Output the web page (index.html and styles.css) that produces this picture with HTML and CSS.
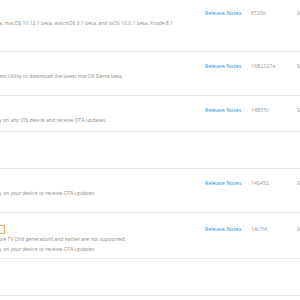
FILE: index.html
```html
<!DOCTYPE html>
<html>
<head>
<meta charset="utf-8">
<link rel="stylesheet" href="styles.css">
</head>
<body>
<div class="table">
  <div class="row r0">
    <div class="info">
      <div class="title"></div>
      <div class="desc">a, macOS 10.12.1 beta, watchOS 3.1 beta, and tvOS 10.0.1 beta. Xcode 8.1</div>
    </div>
    <a class="notes">Release Notes</a>
    <div class="build">8T29o</div>
    <div class="date">Sep 2016</div>
  </div>
  <div class="row r1">
    <div class="info">
      <div class="title"></div>
      <div class="desc">ess Utility to download the latest macOS Sierra beta.</div>
    </div>
    <a class="notes">Release Notes</a>
    <div class="build">16B2327e</div>
    <div class="date">Sep 2016</div>
  </div>
  <div class="row r2">
    <div class="info">
      <div class="title"></div>
      <div class="desc">y on any iOS device and receive OTA updates.</div>
    </div>
    <a class="notes">Release Notes</a>
    <div class="build">14B55c</div>
    <div class="date">Sep 2016</div>
  </div>
  <div class="row r3"></div>
  <div class="row r4">
    <div class="info">
      <div class="title"></div>
      <div class="desc">y on your device to receive OTA updates.</div>
    </div>
    <a class="notes">Release Notes</a>
    <div class="build">14S452</div>
    <div class="date">Sep 2016</div>
  </div>
  <div class="row r5">
    <div class="info">
      <div class="title"><span class="badge">Beta</span></div>
      <div class="desc">ple TV (3rd generation) and earlier are not supported.</div>
      <div class="desc">y on your device to receive OTA updates.</div>
    </div>
    <a class="notes">Release Notes</a>
    <div class="build">14U54</div>
    <div class="date">Sep 2016</div>
  </div>
  <div class="row r6"></div>
</div>
</body>
</html>
```
FILE: styles.css
```css
html, body {
  margin: 0;
  padding: 0;
  overflow: hidden;
  background: #fff;
}
body {
  width: 300px;
  height: 300px;
  font-family: "Open Sans", "Liberation Sans", sans-serif;
}
.table {
  width: 340px;
}
.row {
  display: grid;
  grid-template-columns: 205px 46px 46px 43px;
  align-items: start;
  padding-top: 8px;
  border-bottom: 1px solid #e9e9e9;
  box-sizing: border-box;
  line-height: 10px;
}
.r0 { height: 52px; }
.r1 { height: 44px; padding-top: 9px; }
.r2 { height: 36px; padding-top: 9px; }
.r3 { height: 37px; }
.r4 { height: 44px; padding-top: 9px; }
.r5 { height: 46px; padding-top: 11px; }
.r6 { height: 37px; }
.info {
  margin-left: -1px;
}
.title {
  height: 10px;
  display: flex;
  align-items: center;
}
.badge {
  display: inline-block;
  margin-left: -14px;
  width: 18px;
  height: 7px;
  border: 1px solid #f5a05a;
  font-size: 4px;
  line-height: 7px;
  color: #f08a2c;
  text-align: center;
}
.desc {
  font-size: 5.1px;
  color: #8a8a8a;
  white-space: nowrap;
}
.notes {
  font-size: 5.5px;
  color: #2d8fd8;
  white-space: nowrap;
}
.build {
  font-size: 5.3px;
  color: #9a9a9a;
  white-space: nowrap;
}
.date {
  font-size: 5.3px;
  color: #9a9a9a;
  white-space: nowrap;
}
```
